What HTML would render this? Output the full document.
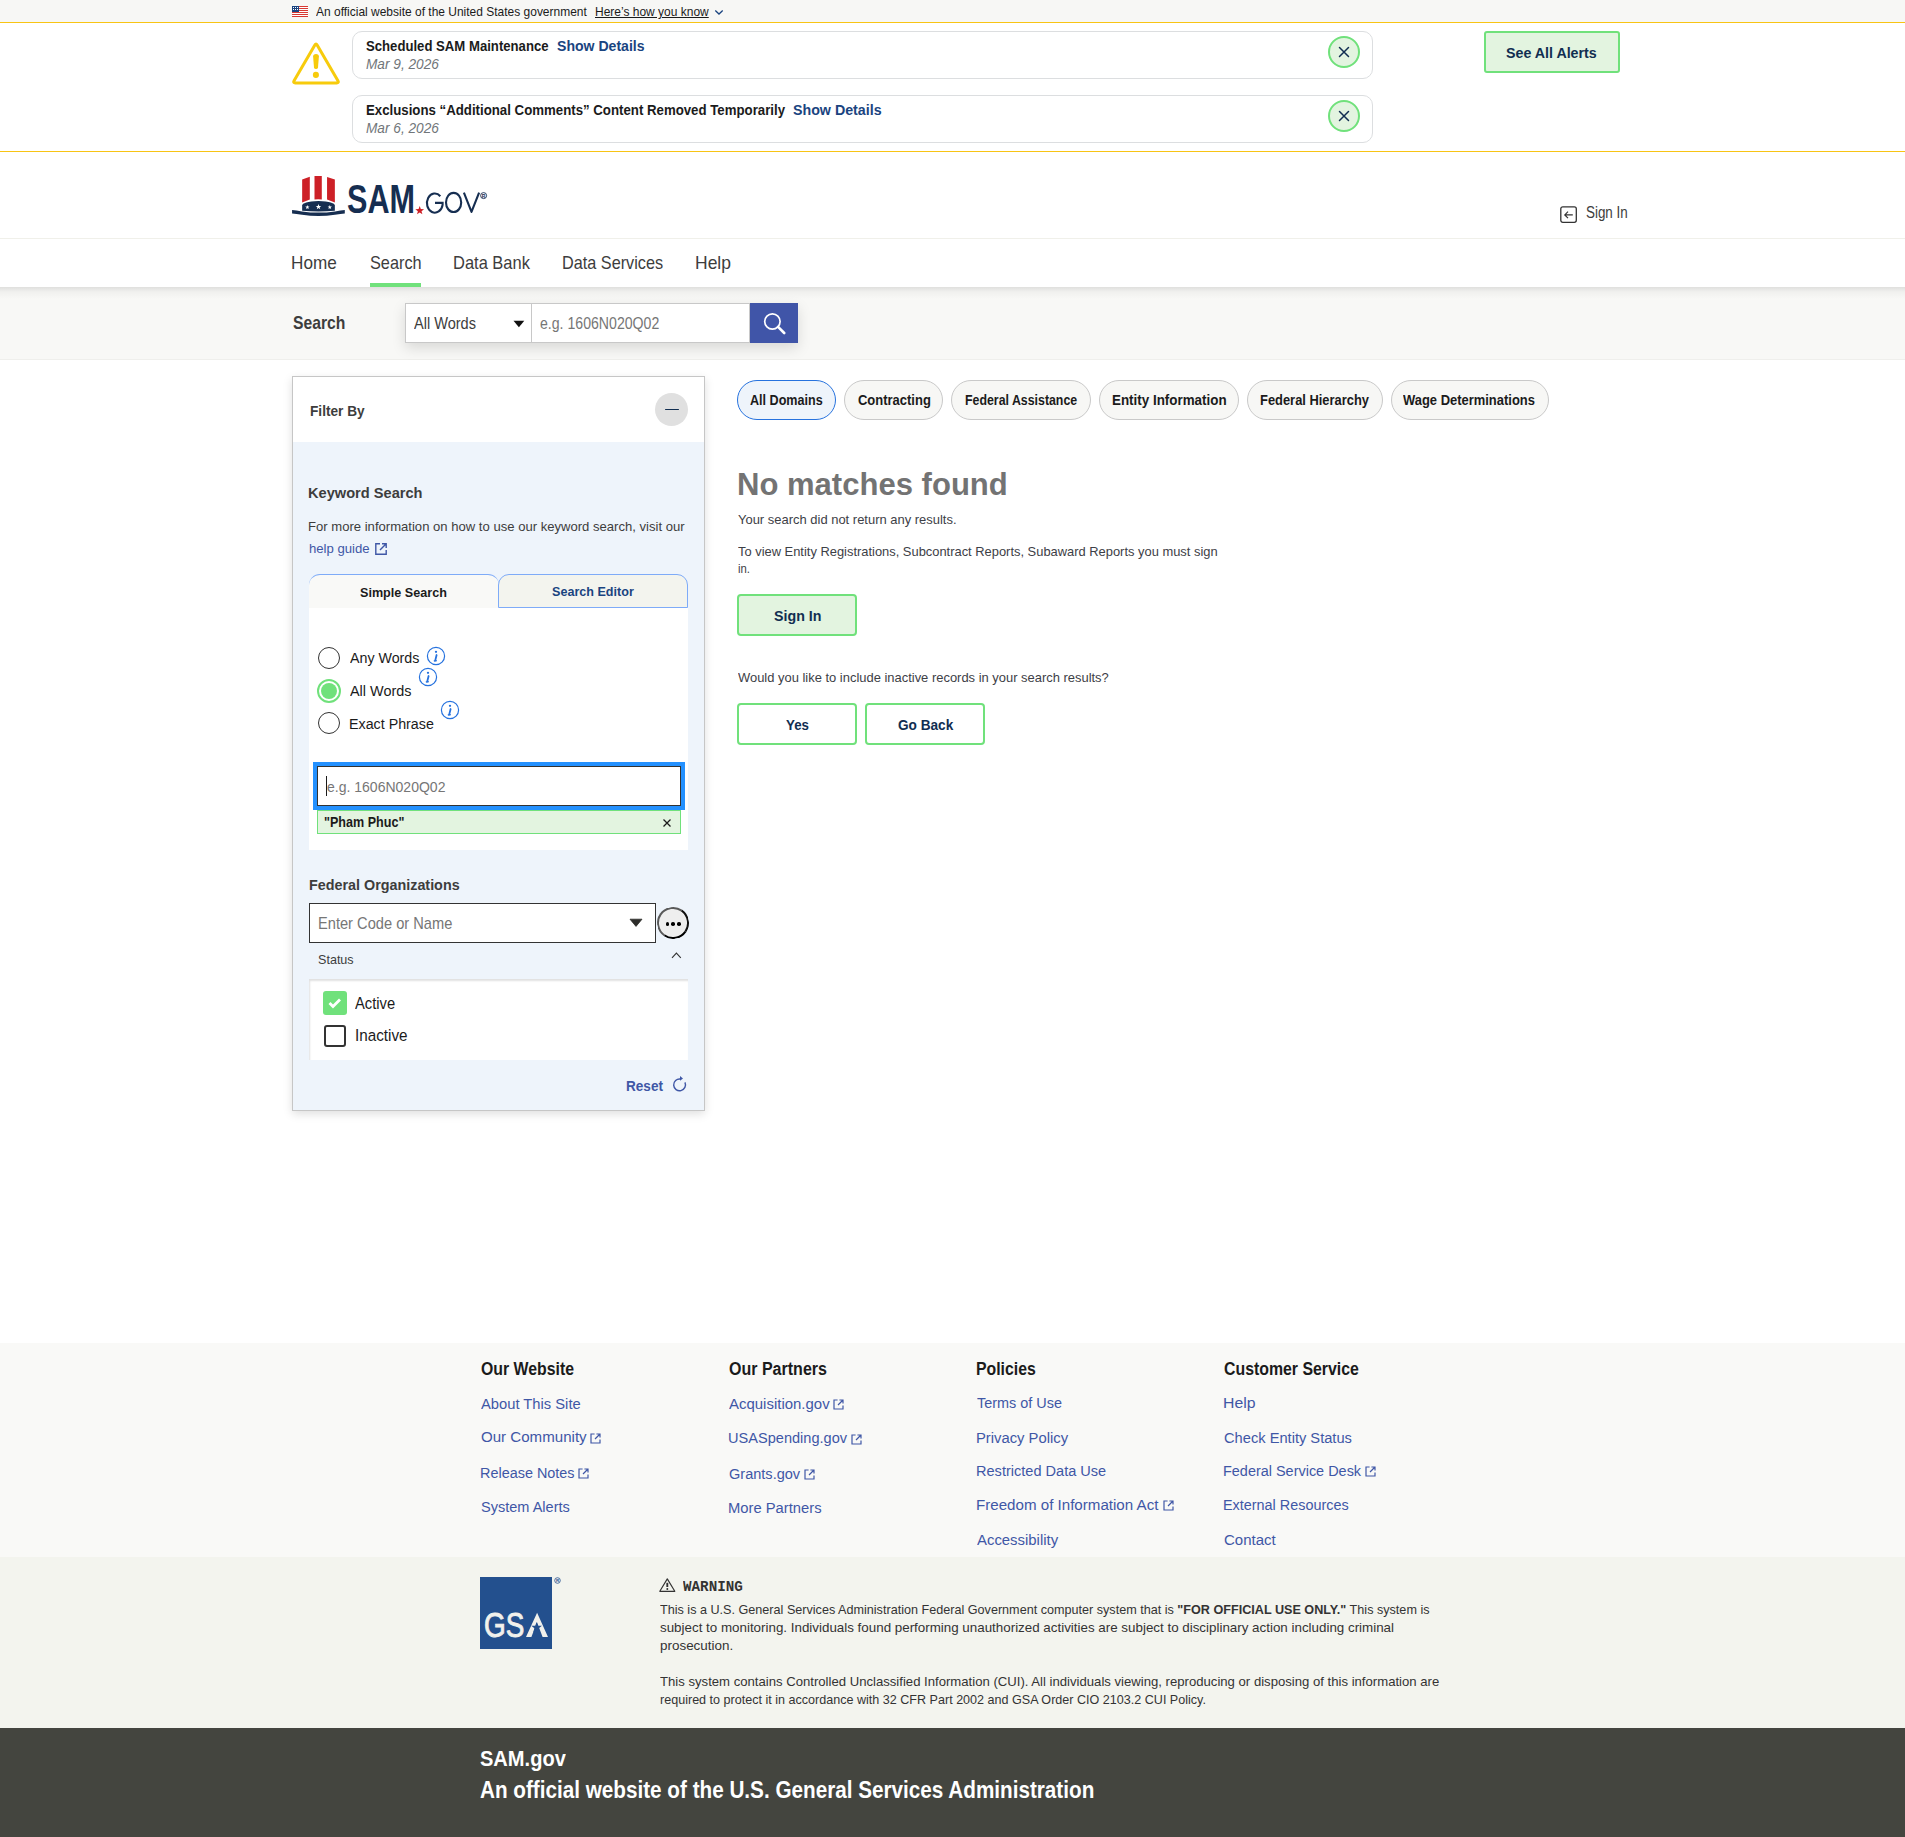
<!DOCTYPE html>
<html><head><meta charset="utf-8"><title>SAM.gov Search</title>
<style>
html,body{margin:0;padding:0}
body{width:1905px;height:1837px;position:relative;overflow:hidden;background:#fff;font-family:'Liberation Sans',sans-serif}
.r{position:absolute}
.t{position:absolute;white-space:nowrap;line-height:1}
</style></head><body>
<div class="r" style="left:0px;top:0px;width:1905px;height:22px;background:#f7f7f5"></div>
<div class="r" style="left:0px;top:22px;width:1905px;height:1px;background:#f8c414"></div>
<svg class="r" style="left:292px;top:6px" width="16" height="11" viewBox="0 0 16 11"><rect width="16" height="11" fill="#fff"/><rect y="0" width="16" height="1" fill="#d83933"/><rect y="2" width="16" height="1" fill="#d83933"/><rect y="4" width="16" height="1" fill="#d83933"/><rect y="6" width="16" height="1" fill="#d83933"/><rect y="8" width="16" height="1" fill="#d83933"/><rect y="10" width="16" height="1" fill="#d83933"/><rect width="7" height="6" fill="#1a4480"/><rect x="1" y="1" width="1" height="1" fill="#fff"/><rect x="1" y="3" width="1" height="1" fill="#fff"/><rect x="3" y="1" width="1" height="1" fill="#fff"/><rect x="3" y="3" width="1" height="1" fill="#fff"/><rect x="5" y="1" width="1" height="1" fill="#fff"/><rect x="5" y="3" width="1" height="1" fill="#fff"/></svg>
<span id="t1" class="t" style="left:316.00px;top:5.00px;font-size:13.62px;font-weight:400;color:#1b1b1b;font-style:normal;font-family:'Liberation Sans', sans-serif;transform:scaleX(0.8803);transform-origin:0 0;">An official website of the United States government</span>
<span id="t2" class="t" style="left:595.12px;top:5.00px;font-size:13.62px;font-weight:400;color:#1b1b1b;font-style:normal;font-family:'Liberation Sans', sans-serif;transform:scaleX(0.8809);transform-origin:0 0;text-decoration:underline;text-underline-offset:1px;">Here’s how you know</span>
<svg class="r" style="left:714px;top:9px" width="10" height="7" viewBox="0 0 10 7"><path d="M1.3 1.5 L5 5 L8.7 1.5" fill="none" stroke="#1a4480" stroke-width="1.3"/></svg>
<div class="r" style="left:0px;top:151px;width:1905px;height:1px;background:#f8c414"></div>
<svg class="r" style="left:291px;top:41px" width="50" height="45" viewBox="0 0 50 45"><path d="M26.26 4.16 L46.94 39.74 Q48.2 41.9 45.7 41.9 L4.3 41.9 Q1.8 41.9 3.06 39.74 L23.74 4.16 Q25 2.0 26.26 4.16 Z" fill="none" stroke="#f7cb0c" stroke-width="3.0" stroke-linejoin="round"/><path d="M22.1 15.6 Q22.1 12.9 25 12.9 Q27.9 12.9 27.9 15.6 L27.0 26.4 Q26.8 28.1 25 28.1 Q23.2 28.1 23.0 26.4 Z" fill="#f7cb0c"/><circle cx="24.9" cy="33.9" r="3.05" fill="#f7cb0c"/></svg>
<div class="r" style="left:352px;top:31px;width:1021px;height:48px;border:1px solid #dcdee0;border-radius:10px;box-sizing:border-box;background:#fff"></div>
<span id="t3" class="t" style="left:365.50px;top:39.01px;font-size:14.49px;font-weight:700;color:#1b1b1b;font-style:normal;font-family:'Liberation Sans', sans-serif;transform:scaleX(0.9073);transform-origin:0 0;">Scheduled SAM Maintenance</span>
<span id="t4" class="t" style="left:556.50px;top:39.01px;font-size:14.49px;font-weight:700;color:#1a4480;font-style:normal;font-family:'Liberation Sans', sans-serif;transform:scaleX(0.9713);transform-origin:0 0;">Show Details</span>
<span id="t5" class="t" style="left:365.50px;top:57.00px;font-size:14.93px;font-weight:400;color:#71767a;font-style:italic;font-family:'Liberation Sans', sans-serif;transform:scaleX(0.9150);transform-origin:0 0;">Mar 9, 2026</span>
<div class="r" style="left:1328px;top:36px;width:32px;height:32px;border:2px solid #70e17b;border-radius:50%;box-sizing:border-box;background:#e3f4e0"></div>
<svg class="r" style="left:1338px;top:46px" width="12" height="12" viewBox="0 0 12 12"><path d="M1.5 1.5 L10.5 10.5 M10.5 1.5 L1.5 10.5" stroke="#112e51" stroke-width="1.5" stroke-linecap="round"/></svg>
<div class="r" style="left:352px;top:95px;width:1021px;height:48px;border:1px solid #dcdee0;border-radius:10px;box-sizing:border-box;background:#fff"></div>
<span id="t6" class="t" style="left:365.50px;top:103.01px;font-size:14.49px;font-weight:700;color:#1b1b1b;font-style:normal;font-family:'Liberation Sans', sans-serif;transform:scaleX(0.9140);transform-origin:0 0;">Exclusions “Additional Comments” Content Removed Temporarily</span>
<span id="t7" class="t" style="left:792.50px;top:103.01px;font-size:14.49px;font-weight:700;color:#1a4480;font-style:normal;font-family:'Liberation Sans', sans-serif;transform:scaleX(0.9824);transform-origin:0 0;">Show Details</span>
<span id="t8" class="t" style="left:365.50px;top:121.00px;font-size:14.93px;font-weight:400;color:#71767a;font-style:italic;font-family:'Liberation Sans', sans-serif;transform:scaleX(0.9150);transform-origin:0 0;">Mar 6, 2026</span>
<div class="r" style="left:1328px;top:100px;width:32px;height:32px;border:2px solid #70e17b;border-radius:50%;box-sizing:border-box;background:#e3f4e0"></div>
<svg class="r" style="left:1338px;top:110px" width="12" height="12" viewBox="0 0 12 12"><path d="M1.5 1.5 L10.5 10.5 M10.5 1.5 L1.5 10.5" stroke="#112e51" stroke-width="1.5" stroke-linecap="round"/></svg>
<div class="r" style="left:1484px;top:31px;width:136px;height:42px;border:2px solid #70e17b;border-radius:3px;box-sizing:border-box;background:#e3f4e0"></div>
<span id="t9" class="t" style="left:1506.40px;top:46.00px;font-size:14.93px;font-weight:700;color:#112e51;font-style:normal;font-family:'Liberation Sans', sans-serif;transform:scaleX(0.9541);transform-origin:0 0;">See All Alerts</span>
<svg class="r" style="left:290px;top:174px" width="200" height="46" viewBox="0 0 200 46">
<path d="M12.15 5.44 L19.8 2.83 L19.8 25.6 L12.15 28.5 Z" fill="#cd2027"/>
<path d="M24.5 2.0 L31.8 2.0 L31.8 25.45 Q28.15 25.1 24.5 25.45 Z" fill="#cd2027"/>
<path d="M37.05 3.0 L44.86 5.44 L44.86 28.5 L37.05 25.6 Z" fill="#cd2027"/>
<path d="M12.15 31.5 Q12.15 27.6 28.5 26.9 Q44.86 27.6 44.86 31.5 L44.86 36.7 Q28.5 38.2 12.15 36.7 Z" fill="#162e51"/>
<path d="M2.07 36.0 Q6 36.2 12 37.4 Q28.5 39.8 45 37.4 Q51 36.2 54.8 36.0 L54.8 39.6 Q51 40.0 45 40.8 Q28.5 43.2 12 40.8 Q6 40.0 2.07 39.6 Z" fill="#162e51"/>
<polygon points="17.40,30.90 17.96,32.43 19.59,32.49 18.30,33.49 18.75,35.06 17.40,34.15 16.05,35.06 16.50,33.49 15.21,32.49 16.84,32.43" fill="#fff"/>
<polygon points="28.50,30.00 29.21,31.93 31.26,32.00 29.64,33.27 30.20,35.25 28.50,34.10 26.80,35.25 27.36,33.27 25.74,32.00 27.79,31.93" fill="#fff"/>
<polygon points="39.80,30.90 40.36,32.43 41.99,32.49 40.70,33.49 41.15,35.06 39.80,34.15 38.45,35.06 38.90,33.49 37.61,32.49 39.24,32.43" fill="#fff"/>
<polygon points="129.70,32.00 130.82,35.06 134.07,35.18 131.51,37.19 132.40,40.32 129.70,38.50 127.00,40.32 127.89,37.19 125.33,35.18 128.58,35.06" fill="#cd2027"/>
<path d="M150.3 22.2 A7.9 9.6 0 1 0 152.6 30.8 L152.6 28.9 L145.0 28.9" fill="none" stroke="#162e51" stroke-width="2.1"/><ellipse cx="163.6" cy="28.45" rx="7.6" ry="9.6" fill="none" stroke="#162e51" stroke-width="2.1"/><path d="M173.9 18.6 L181.5 37.9 L189.1 18.6" fill="none" stroke="#162e51" stroke-width="2.1" stroke-linejoin="round"/><circle cx="193.6" cy="21.6" r="3.0" fill="none" stroke="#162e51" stroke-width="0.9"/><text x="193.6" y="23.6" font-size="5" font-weight="700" text-anchor="middle" fill="#162e51" font-family="Liberation Sans">R</text>
</svg>
<span id="t10" class="t" style="left:346.73px;top:180.01px;font-size:39.86px;font-weight:700;color:#162e51;font-style:normal;font-family:'Liberation Sans', sans-serif;transform:scaleX(0.7672);transform-origin:0 0;">SAM</span>
<div class="r" style="left:0px;top:238px;width:1905px;height:1px;background:#f0f0ea"></div>
<svg class="r" style="left:1559px;top:205px" width="19" height="19" viewBox="0 0 19 19"><rect x="1.8" y="1.8" width="15.5" height="15.5" rx="2" fill="none" stroke="#333" stroke-width="1.3"/><path d="M13.8 9.9 L6 9.9 M9 6.7 L5.8 9.9 L9 13.1" fill="none" stroke="#333" stroke-width="1.2"/></svg>
<span id="t11" class="t" style="left:1586.00px;top:205.01px;font-size:15.94px;font-weight:400;color:#3d3d3d;font-style:normal;font-family:'Liberation Sans', sans-serif;transform:scaleX(0.8410);transform-origin:0 0;">Sign In</span>
<span id="t12" class="t" style="left:291.24px;top:255.01px;font-size:17.97px;font-weight:400;color:#3d3d3d;font-style:normal;font-family:'Liberation Sans', sans-serif;transform:scaleX(0.9551);transform-origin:0 0;">Home</span>
<span id="t13" class="t" style="left:370.00px;top:255.01px;font-size:17.97px;font-weight:400;color:#3d3d3d;font-style:normal;font-family:'Liberation Sans', sans-serif;transform:scaleX(0.9070);transform-origin:0 0;">Search</span>
<span id="t14" class="t" style="left:453.08px;top:255.01px;font-size:17.97px;font-weight:400;color:#3d3d3d;font-style:normal;font-family:'Liberation Sans', sans-serif;transform:scaleX(0.9173);transform-origin:0 0;">Data Bank</span>
<span id="t15" class="t" style="left:561.90px;top:255.01px;font-size:17.97px;font-weight:400;color:#3d3d3d;font-style:normal;font-family:'Liberation Sans', sans-serif;transform:scaleX(0.9045);transform-origin:0 0;">Data Services</span>
<span id="t16" class="t" style="left:694.63px;top:255.01px;font-size:17.97px;font-weight:400;color:#3d3d3d;font-style:normal;font-family:'Liberation Sans', sans-serif;transform:scaleX(0.9739);transform-origin:0 0;">Help</span>
<div class="r" style="left:370px;top:283px;width:51px;height:4px;background:#70e17b"></div>
<div class="r" style="left:0px;top:287px;width:1905px;height:73px;background:#f8f8f6"></div>
<div class="r" style="left:0px;top:287px;width:1905px;height:12px;background:linear-gradient(rgba(0,0,0,0.10),rgba(0,0,0,0.03) 40%,rgba(0,0,0,0))"></div>
<div class="r" style="left:0px;top:359px;width:1905px;height:1px;background:#efefec"></div>
<div class="r" style="left:405px;top:303px;width:393px;height:40px;box-shadow:0 5px 14px rgba(0,0,0,0.13)"></div>
<div class="r" style="left:405px;top:303px;width:127px;height:40px;background:#fff;border:1px solid #c8c8c8;box-sizing:border-box"></div>
<div class="r" style="left:531px;top:303px;width:219px;height:40px;background:#fff;border:1px solid #c8c8c8;box-sizing:border-box"></div>
<div class="r" style="left:750px;top:303px;width:48px;height:40px;background:#4055a8"></div>
<svg class="r" style="left:761px;top:311px" width="25" height="25" viewBox="0 0 25 25"><circle cx="11.4" cy="10.5" r="7.7" fill="none" stroke="#fff" stroke-width="1.7"/><path d="M17.1 15.9 L23.2 22" stroke="#fff" stroke-width="2.6" stroke-linecap="round"/></svg>
<svg class="r" style="left:513px;top:320px" width="12" height="8" viewBox="0 0 12 8"><path d="M0.5 0.8 L11.3 0.8 L5.9 7.2 Z" fill="#111"/></svg>
<span id="t17" class="t" style="left:292.50px;top:315.01px;font-size:17.97px;font-weight:700;color:#3d3d3d;font-style:normal;font-family:'Liberation Sans', sans-serif;transform:scaleX(0.8741);transform-origin:0 0;">Search</span>
<span id="t18" class="t" style="left:414.40px;top:316.01px;font-size:15.94px;font-weight:400;color:#3d3d3d;font-style:normal;font-family:'Liberation Sans', sans-serif;transform:scaleX(0.9127);transform-origin:0 0;">All Words</span>
<span id="t19" class="t" style="left:540.40px;top:316.01px;font-size:15.94px;font-weight:400;color:#767676;font-style:normal;font-family:'Liberation Sans', sans-serif;transform:scaleX(0.8856);transform-origin:0 0;">e.g. 1606N020Q02</span>
<div class="r" style="left:292px;top:376px;width:413px;height:735px;background:#eef4fb;border:1px solid #c6c6c6;box-sizing:border-box;box-shadow:0 3px 9px rgba(0,0,0,0.13)"></div>
<div class="r" style="left:293px;top:377px;width:411px;height:65px;background:#fff"></div>
<span id="t20" class="t" style="left:309.80px;top:404.00px;font-size:14.64px;font-weight:700;color:#3d3d3d;font-style:normal;font-family:'Liberation Sans', sans-serif;transform:scaleX(0.9346);transform-origin:0 0;">Filter By</span>
<div class="r" style="left:655px;top:393px;width:33px;height:33px;background:#e0e0e0;border-radius:50%"></div>
<div class="r" style="left:665px;top:408.8px;width:14px;height:1.6px;background:#112e51;border-radius:1px"></div>
<span id="t21" class="t" style="left:308.42px;top:486.01px;font-size:14.93px;font-weight:700;color:#3d3d3d;font-style:normal;font-family:'Liberation Sans', sans-serif;transform:scaleX(0.9791);transform-origin:0 0;">Keyword Search</span>
<span id="t22" class="t" style="left:308.40px;top:520.01px;font-size:13.04px;font-weight:400;color:#3d3d3d;font-style:normal;font-family:'Liberation Sans', sans-serif;transform:scaleX(1.0039);transform-origin:0 0;">For more information on how to use our keyword search, visit our</span>
<span id="t23" class="t" style="left:309.40px;top:542.01px;font-size:13.04px;font-weight:400;color:#3f57a6;font-style:normal;font-family:'Liberation Sans', sans-serif;transform:scaleX(1.0084);transform-origin:0 0;">help guide</span>
<svg class="r" style="left:374px;top:542px" width="14" height="14" viewBox="0 0 14 14"><path d="M6 1.8 L1.8 1.8 L1.8 12.2 L12.2 12.2 L12.2 8" fill="none" stroke="#3f57a6" stroke-width="1.4"/><path d="M8 1.8 L12.2 1.8 L12.2 6 M12.2 1.8 L6 8" fill="none" stroke="#3f57a6" stroke-width="1.4"/></svg>
<div class="r" style="left:309px;top:608px;width:379px;height:242px;background:#fff"></div>
<div class="r" style="left:309px;top:574px;width:190px;height:34px;background:#f9f9f7;border-top:1px solid #7eabf8;border-radius:11px 11px 0 0;box-sizing:border-box"></div>
<div class="r" style="left:498px;top:574px;width:190px;height:34px;background:#f3f4ee;border:1px solid #7eabf8;border-radius:11px 11px 0 0;box-sizing:border-box"></div>
<span id="t24" class="t" style="left:359.80px;top:586.01px;font-size:13.33px;font-weight:700;color:#1b1b1b;font-style:normal;font-family:'Liberation Sans', sans-serif;transform:scaleX(0.9453);transform-origin:0 0;">Simple Search</span>
<span id="t25" class="t" style="left:552.30px;top:585.01px;font-size:13.33px;font-weight:700;color:#1a4480;font-style:normal;font-family:'Liberation Sans', sans-serif;transform:scaleX(0.9437);transform-origin:0 0;">Search Editor</span>
<div class="r" style="left:318px;top:647px;width:22px;height:22px;border:1.5px solid #333;border-radius:50%;box-sizing:border-box;background:#fff"></div>
<div class="r" style="left:317px;top:679px;width:24px;height:24px;border:2px solid #70e17b;border-radius:50%;box-sizing:border-box;background:#fff"></div>
<div class="r" style="left:321px;top:683px;width:16px;height:16px;border-radius:50%;background:#70e17b"></div>
<div class="r" style="left:318px;top:712px;width:22px;height:22px;border:1.5px solid #333;border-radius:50%;box-sizing:border-box;background:#fff"></div>
<span id="t26" class="t" style="left:349.50px;top:650.01px;font-size:15.22px;font-weight:400;color:#1b1b1b;font-style:normal;font-family:'Liberation Sans', sans-serif;transform:scaleX(0.9351);transform-origin:0 0;">Any Words</span>
<span id="t27" class="t" style="left:349.50px;top:683.01px;font-size:15.22px;font-weight:400;color:#1b1b1b;font-style:normal;font-family:'Liberation Sans', sans-serif;transform:scaleX(0.9475);transform-origin:0 0;">All Words</span>
<span id="t28" class="t" style="left:348.56px;top:716.01px;font-size:15.22px;font-weight:400;color:#1b1b1b;font-style:normal;font-family:'Liberation Sans', sans-serif;transform:scaleX(0.9377);transform-origin:0 0;">Exact Phrase</span>
<svg class="r" style="left:426.3px;top:646.2px" width="20" height="20" viewBox="0 0 20 20"><circle cx="10" cy="10" r="8.6" fill="none" stroke="#2672de" stroke-width="1.2"/><path d="M10.6 9.0 L9.2 14.6 M8.6 14.8 L10.0 14.6" stroke="#2672de" stroke-width="1.8" stroke-linecap="round"/><circle cx="10.0" cy="5.8" r="1.15" fill="#2672de"/></svg>
<svg class="r" style="left:418.2px;top:667.1px" width="20" height="20" viewBox="0 0 20 20"><circle cx="10" cy="10" r="8.6" fill="none" stroke="#2672de" stroke-width="1.2"/><path d="M10.6 9.0 L9.2 14.6 M8.6 14.8 L10.0 14.6" stroke="#2672de" stroke-width="1.8" stroke-linecap="round"/><circle cx="10.0" cy="5.8" r="1.15" fill="#2672de"/></svg>
<svg class="r" style="left:440.3px;top:700.0px" width="20" height="20" viewBox="0 0 20 20"><circle cx="10" cy="10" r="8.6" fill="none" stroke="#2672de" stroke-width="1.2"/><path d="M10.6 9.0 L9.2 14.6 M8.6 14.8 L10.0 14.6" stroke="#2672de" stroke-width="1.8" stroke-linecap="round"/><circle cx="10.0" cy="5.8" r="1.15" fill="#2672de"/></svg>
<div class="r" style="left:313px;top:762px;width:372px;height:48px;background:#2491ff"></div>
<div class="r" style="left:317px;top:766px;width:364px;height:40px;background:#fff;border:1px solid #333;box-sizing:border-box"></div>
<div class="r" style="left:326px;top:776px;width:1px;height:20px;background:#1b1b1b"></div>
<span id="t29" class="t" style="left:327.00px;top:779.00px;font-size:15.22px;font-weight:400;color:#767676;font-style:normal;font-family:'Liberation Sans', sans-serif;transform:scaleX(0.9208);transform-origin:0 0;">e.g. 1606N020Q02</span>
<div class="r" style="left:317px;top:810px;width:364px;height:24px;background:#e3f4e0;border:1px solid #70e17b;box-sizing:border-box"></div>
<span id="t30" class="t" style="left:323.50px;top:816.01px;font-size:13.91px;font-weight:700;color:#1b1b1b;font-style:normal;font-family:'Liberation Sans', sans-serif;transform:scaleX(0.9035);transform-origin:0 0;">"Pham Phuc"</span>
<svg class="r" style="left:662px;top:818px" width="10" height="10" viewBox="0 0 10 10"><path d="M1.5 1.5 L8.5 8.5 M8.5 1.5 L1.5 8.5" stroke="#1b1b1b" stroke-width="1.3"/></svg>
<span id="t31" class="t" style="left:308.55px;top:877.01px;font-size:15.07px;font-weight:700;color:#3d3d3d;font-style:normal;font-family:'Liberation Sans', sans-serif;transform:scaleX(0.9521);transform-origin:0 0;">Federal Organizations</span>
<div class="r" style="left:309px;top:903px;width:347px;height:40px;background:#fff;border:1px solid #333;box-sizing:border-box"></div>
<span id="t32" class="t" style="left:317.50px;top:915.00px;font-size:16.38px;font-weight:400;color:#767676;font-style:normal;font-family:'Liberation Sans', sans-serif;transform:scaleX(0.8950);transform-origin:0 0;">Enter Code or Name</span>
<svg class="r" style="left:629px;top:918px" width="14" height="10" viewBox="0 0 14 10"><path d="M1 1.2 L13 1.2 L7 8.4 Z" fill="#2d2d2a" stroke="#2d2d2a" stroke-width="0.8" stroke-linejoin="round"/></svg>
<div class="r" style="left:656.5px;top:907px;width:31.5px;height:31.8px;border:2px solid #111;border-color:#5a5a5a #111 #000 #5a5a5a;border-radius:50%;box-sizing:border-box;background:#eee;transform:rotate(-10deg)"></div>
<div class="r" style="left:665.6px;top:922.4px;width:3.6px;height:3.6px;background:#000;border-radius:50%"></div>
<div class="r" style="left:671.4000000000001px;top:922.4px;width:3.6px;height:3.6px;background:#000;border-radius:50%"></div>
<div class="r" style="left:677.2px;top:922.4px;width:3.6px;height:3.6px;background:#000;border-radius:50%"></div>
<span id="t33" class="t" style="left:317.50px;top:954.01px;font-size:12.32px;font-weight:400;color:#3d3d3d;font-style:normal;font-family:'Liberation Sans', sans-serif;transform:scaleX(1.0216);transform-origin:0 0;">Status</span>
<svg class="r" style="left:670px;top:950px" width="13" height="10" viewBox="0 0 13 10"><path d="M2.0 7.9 L6.4 3.1 L10.8 7.9" fill="none" stroke="#333" stroke-width="1.1"/></svg>
<div class="r" style="left:309px;top:979px;width:379px;height:81px;background:#fff;box-shadow:inset 1px 2px 2px rgba(0,0,0,0.12)"></div>
<div class="r" style="left:323px;top:991px;width:24px;height:24px;border-radius:3px;background:#70e17b"></div>
<svg class="r" style="left:323px;top:991px" width="24" height="24" viewBox="0 0 24 24"><path d="M6.5 12 L10 15.5 L17 8.5" fill="none" stroke="#fff" stroke-width="2.8"/></svg>
<div class="r" style="left:324px;top:1025px;width:22px;height:22px;border:2px solid #333;border-radius:3px;box-sizing:border-box;background:#fff"></div>
<span id="t34" class="t" style="left:354.80px;top:996.01px;font-size:15.94px;font-weight:400;color:#1b1b1b;font-style:normal;font-family:'Liberation Sans', sans-serif;transform:scaleX(0.9234);transform-origin:0 0;">Active</span>
<span id="t35" class="t" style="left:354.74px;top:1028.01px;font-size:15.94px;font-weight:400;color:#1b1b1b;font-style:normal;font-family:'Liberation Sans', sans-serif;transform:scaleX(0.9563);transform-origin:0 0;">Inactive</span>
<span id="t36" class="t" style="left:625.50px;top:1079.00px;font-size:14.20px;font-weight:700;color:#3f57a6;font-style:normal;font-family:'Liberation Sans', sans-serif;transform:scaleX(0.9559);transform-origin:0 0;">Reset</span>
<svg class="r" style="left:671px;top:1075px" width="17" height="18" viewBox="0 0 17 18"><path d="M9.4 4.0 A5.9 5.9 0 1 0 13.95 7.4" fill="none" stroke="#3f57a6" stroke-width="1.4"/><path d="M9.0 1.0 L12.0 3.4 L9.0 5.8 Z" fill="#3f57a6"/></svg>
<div class="r" style="left:737px;top:380px;width:99px;height:40px;background:#eef4fb;border:1px solid #2672de;border-radius:20px;box-sizing:border-box"></div>
<span id="t37" class="t" style="left:750.40px;top:393.01px;font-size:14.20px;font-weight:700;color:#1b1b1b;font-style:normal;font-family:'Liberation Sans', sans-serif;transform:scaleX(0.8868);transform-origin:0 0;">All Domains</span>
<div class="r" style="left:844px;top:380px;width:99px;height:40px;background:#f7f7f5;border:1px solid #c9c9c9;border-radius:20px;box-sizing:border-box"></div>
<span id="t38" class="t" style="left:857.80px;top:393.01px;font-size:14.20px;font-weight:700;color:#1b1b1b;font-style:normal;font-family:'Liberation Sans', sans-serif;transform:scaleX(0.9146);transform-origin:0 0;">Contracting</span>
<div class="r" style="left:951px;top:380px;width:140px;height:40px;background:#f7f7f5;border:1px solid #c9c9c9;border-radius:20px;box-sizing:border-box"></div>
<span id="t39" class="t" style="left:964.60px;top:393.01px;font-size:14.20px;font-weight:700;color:#1b1b1b;font-style:normal;font-family:'Liberation Sans', sans-serif;transform:scaleX(0.8707);transform-origin:0 0;">Federal Assistance</span>
<div class="r" style="left:1099px;top:380px;width:140px;height:40px;background:#f7f7f5;border:1px solid #c9c9c9;border-radius:20px;box-sizing:border-box"></div>
<span id="t40" class="t" style="left:1111.70px;top:393.01px;font-size:14.20px;font-weight:700;color:#1b1b1b;font-style:normal;font-family:'Liberation Sans', sans-serif;transform:scaleX(0.9444);transform-origin:0 0;">Entity Information</span>
<div class="r" style="left:1247px;top:380px;width:136px;height:40px;background:#f7f7f5;border:1px solid #c9c9c9;border-radius:20px;box-sizing:border-box"></div>
<span id="t41" class="t" style="left:1260.20px;top:393.01px;font-size:14.20px;font-weight:700;color:#1b1b1b;font-style:normal;font-family:'Liberation Sans', sans-serif;transform:scaleX(0.9093);transform-origin:0 0;">Federal Hierarchy</span>
<div class="r" style="left:1391px;top:380px;width:158px;height:40px;background:#f7f7f5;border:1px solid #c9c9c9;border-radius:20px;box-sizing:border-box"></div>
<span id="t42" class="t" style="left:1403.40px;top:393.01px;font-size:14.20px;font-weight:700;color:#1b1b1b;font-style:normal;font-family:'Liberation Sans', sans-serif;transform:scaleX(0.9126);transform-origin:0 0;">Wage Determinations</span>
<span id="t43" class="t" style="left:737.05px;top:469.01px;font-size:31.88px;font-weight:700;color:#737373;font-style:normal;font-family:'Liberation Sans', sans-serif;transform:scaleX(0.9739);transform-origin:0 0;">No matches found</span>
<span id="t44" class="t" style="left:737.50px;top:514.01px;font-size:12.75px;font-weight:400;color:#3d4046;font-style:normal;font-family:'Liberation Sans', sans-serif;transform:scaleX(1.0166);transform-origin:0 0;">Your search did not return any results.</span>
<span id="t45" class="t" style="left:737.50px;top:546.02px;font-size:12.75px;font-weight:400;color:#3d4046;font-style:normal;font-family:'Liberation Sans', sans-serif;transform:scaleX(1.0116);transform-origin:0 0;">To view Entity Registrations, Subcontract Reports, Subaward Reports you must sign</span>
<span id="t46" class="t" style="left:737.50px;top:563.02px;font-size:12.75px;font-weight:400;color:#3d4046;font-style:normal;font-family:'Liberation Sans', sans-serif;transform:scaleX(0.8898);transform-origin:0 0;">in.</span>
<div class="r" style="left:737px;top:594px;width:120px;height:42px;background:#e3f4e0;border:2px solid #70e17b;border-radius:4px;box-sizing:border-box"></div>
<span id="t47" class="t" style="left:773.90px;top:609.00px;font-size:14.93px;font-weight:700;color:#112e51;font-style:normal;font-family:'Liberation Sans', sans-serif;transform:scaleX(0.9532);transform-origin:0 0;">Sign In</span>
<span id="t48" class="t" style="left:737.50px;top:672.00px;font-size:12.75px;font-weight:400;color:#3d4046;font-style:normal;font-family:'Liberation Sans', sans-serif;transform:scaleX(1.0146);transform-origin:0 0;">Would you like to include inactive records in your search results?</span>
<div class="r" style="left:737px;top:703px;width:120px;height:42px;background:#fff;border:2px solid #70e17b;border-radius:4px;box-sizing:border-box"></div>
<div class="r" style="left:865px;top:703px;width:120px;height:42px;background:#fff;border:2px solid #70e17b;border-radius:4px;box-sizing:border-box"></div>
<span id="t49" class="t" style="left:786.00px;top:718.00px;font-size:14.93px;font-weight:700;color:#112e51;font-style:normal;font-family:'Liberation Sans', sans-serif;transform:scaleX(0.8927);transform-origin:0 0;">Yes</span>
<span id="t50" class="t" style="left:897.50px;top:718.00px;font-size:14.93px;font-weight:700;color:#112e51;font-style:normal;font-family:'Liberation Sans', sans-serif;transform:scaleX(0.9128);transform-origin:0 0;">Go Back</span>
<div class="r" style="left:0px;top:1343px;width:1905px;height:214px;background:#f9f9f7"></div>
<div class="r" style="left:0px;top:1557px;width:1905px;height:171px;background:#f3f4ee"></div>
<div class="r" style="left:0px;top:1728px;width:1905px;height:109px;background:#44453f"></div>
<span id="t51" class="t" style="left:480.50px;top:1361.02px;font-size:17.68px;font-weight:700;color:#1b1b1b;font-style:normal;font-family:'Liberation Sans', sans-serif;transform:scaleX(0.8967);transform-origin:0 0;">Our Website</span>
<span id="t52" class="t" style="left:480.50px;top:1396.01px;font-size:15.22px;font-weight:400;color:#3f57a6;font-style:normal;font-family:'Liberation Sans', sans-serif;transform:scaleX(0.9685);transform-origin:0 0;">About This Site</span>
<span id="t53" class="t" style="left:480.50px;top:1429.01px;font-size:15.22px;font-weight:400;color:#3f57a6;font-style:normal;font-family:'Liberation Sans', sans-serif;transform:scaleX(0.9912);transform-origin:0 0;">Our Community</span>
<svg class="r" style="left:590.0px;top:1432.7px" width="11" height="11" viewBox="0 0 11 11"><path d="M4.6 1 L1 1 L1 10 L10 10 L10 6.4" fill="none" stroke="#3f57a6" stroke-width="1.2"/><path d="M6.4 1 L10 1 L10 4.6 M10 1 L5 6" fill="none" stroke="#3f57a6" stroke-width="1.2"/></svg>
<span id="t54" class="t" style="left:479.55px;top:1465.00px;font-size:15.22px;font-weight:400;color:#3f57a6;font-style:normal;font-family:'Liberation Sans', sans-serif;transform:scaleX(0.9475);transform-origin:0 0;">Release Notes</span>
<svg class="r" style="left:578.0px;top:1467.8px" width="11" height="11" viewBox="0 0 11 11"><path d="M4.6 1 L1 1 L1 10 L10 10 L10 6.4" fill="none" stroke="#3f57a6" stroke-width="1.2"/><path d="M6.4 1 L10 1 L10 4.6 M10 1 L5 6" fill="none" stroke="#3f57a6" stroke-width="1.2"/></svg>
<span id="t55" class="t" style="left:480.50px;top:1499.00px;font-size:15.22px;font-weight:400;color:#3f57a6;font-style:normal;font-family:'Liberation Sans', sans-serif;transform:scaleX(0.9548);transform-origin:0 0;">System Alerts</span>
<span id="t56" class="t" style="left:728.50px;top:1361.02px;font-size:17.68px;font-weight:700;color:#1b1b1b;font-style:normal;font-family:'Liberation Sans', sans-serif;transform:scaleX(0.9066);transform-origin:0 0;">Our Partners</span>
<span id="t57" class="t" style="left:728.50px;top:1396.01px;font-size:15.22px;font-weight:400;color:#3f57a6;font-style:normal;font-family:'Liberation Sans', sans-serif;transform:scaleX(0.9829);transform-origin:0 0;">Acquisition.gov</span>
<svg class="r" style="left:833.0px;top:1399.0px" width="11" height="11" viewBox="0 0 11 11"><path d="M4.6 1 L1 1 L1 10 L10 10 L10 6.4" fill="none" stroke="#3f57a6" stroke-width="1.2"/><path d="M6.4 1 L10 1 L10 4.6 M10 1 L5 6" fill="none" stroke="#3f57a6" stroke-width="1.2"/></svg>
<span id="t58" class="t" style="left:727.54px;top:1430.00px;font-size:15.22px;font-weight:400;color:#3f57a6;font-style:normal;font-family:'Liberation Sans', sans-serif;transform:scaleX(0.9575);transform-origin:0 0;">USASpending.gov</span>
<svg class="r" style="left:850.5px;top:1433.6px" width="11" height="11" viewBox="0 0 11 11"><path d="M4.6 1 L1 1 L1 10 L10 10 L10 6.4" fill="none" stroke="#3f57a6" stroke-width="1.2"/><path d="M6.4 1 L10 1 L10 4.6 M10 1 L5 6" fill="none" stroke="#3f57a6" stroke-width="1.2"/></svg>
<span id="t59" class="t" style="left:728.50px;top:1466.01px;font-size:15.22px;font-weight:400;color:#3f57a6;font-style:normal;font-family:'Liberation Sans', sans-serif;transform:scaleX(0.9555);transform-origin:0 0;">Grants.gov</span>
<svg class="r" style="left:803.5px;top:1468.9px" width="11" height="11" viewBox="0 0 11 11"><path d="M4.6 1 L1 1 L1 10 L10 10 L10 6.4" fill="none" stroke="#3f57a6" stroke-width="1.2"/><path d="M6.4 1 L10 1 L10 4.6 M10 1 L5 6" fill="none" stroke="#3f57a6" stroke-width="1.2"/></svg>
<span id="t60" class="t" style="left:727.53px;top:1500.01px;font-size:15.22px;font-weight:400;color:#3f57a6;font-style:normal;font-family:'Liberation Sans', sans-serif;transform:scaleX(0.9707);transform-origin:0 0;">More Partners</span>
<span id="t61" class="t" style="left:975.71px;top:1361.02px;font-size:17.68px;font-weight:700;color:#1b1b1b;font-style:normal;font-family:'Liberation Sans', sans-serif;transform:scaleX(0.8944);transform-origin:0 0;">Policies</span>
<span id="t62" class="t" style="left:976.60px;top:1395.01px;font-size:15.22px;font-weight:400;color:#3f57a6;font-style:normal;font-family:'Liberation Sans', sans-serif;transform:scaleX(0.9476);transform-origin:0 0;">Terms of Use</span>
<span id="t63" class="t" style="left:975.63px;top:1430.00px;font-size:15.22px;font-weight:400;color:#3f57a6;font-style:normal;font-family:'Liberation Sans', sans-serif;transform:scaleX(0.9723);transform-origin:0 0;">Privacy Policy</span>
<span id="t64" class="t" style="left:975.64px;top:1463.01px;font-size:15.22px;font-weight:400;color:#3f57a6;font-style:normal;font-family:'Liberation Sans', sans-serif;transform:scaleX(0.9561);transform-origin:0 0;">Restricted Data Use</span>
<span id="t65" class="t" style="left:975.61px;top:1497.00px;font-size:15.22px;font-weight:400;color:#3f57a6;font-style:normal;font-family:'Liberation Sans', sans-serif;transform:scaleX(0.9937);transform-origin:0 0;">Freedom of Information Act</span>
<svg class="r" style="left:1163.1px;top:1499.8px" width="11" height="11" viewBox="0 0 11 11"><path d="M4.6 1 L1 1 L1 10 L10 10 L10 6.4" fill="none" stroke="#3f57a6" stroke-width="1.2"/><path d="M6.4 1 L10 1 L10 4.6 M10 1 L5 6" fill="none" stroke="#3f57a6" stroke-width="1.2"/></svg>
<span id="t66" class="t" style="left:976.60px;top:1532.00px;font-size:15.22px;font-weight:400;color:#3f57a6;font-style:normal;font-family:'Liberation Sans', sans-serif;transform:scaleX(0.9788);transform-origin:0 0;">Accessibility</span>
<span id="t67" class="t" style="left:1224.30px;top:1361.02px;font-size:17.68px;font-weight:700;color:#1b1b1b;font-style:normal;font-family:'Liberation Sans', sans-serif;transform:scaleX(0.8973);transform-origin:0 0;">Customer Service</span>
<span id="t68" class="t" style="left:1223.26px;top:1395.01px;font-size:15.22px;font-weight:400;color:#3f57a6;font-style:normal;font-family:'Liberation Sans', sans-serif;transform:scaleX(1.0390);transform-origin:0 0;">Help</span>
<span id="t69" class="t" style="left:1224.30px;top:1430.00px;font-size:15.22px;font-weight:400;color:#3f57a6;font-style:normal;font-family:'Liberation Sans', sans-serif;transform:scaleX(0.9633);transform-origin:0 0;">Check Entity Status</span>
<span id="t70" class="t" style="left:1223.35px;top:1463.01px;font-size:15.22px;font-weight:400;color:#3f57a6;font-style:normal;font-family:'Liberation Sans', sans-serif;transform:scaleX(0.9491);transform-origin:0 0;">Federal Service Desk</span>
<svg class="r" style="left:1365.3px;top:1465.9px" width="11" height="11" viewBox="0 0 11 11"><path d="M4.6 1 L1 1 L1 10 L10 10 L10 6.4" fill="none" stroke="#3f57a6" stroke-width="1.2"/><path d="M6.4 1 L10 1 L10 4.6 M10 1 L5 6" fill="none" stroke="#3f57a6" stroke-width="1.2"/></svg>
<span id="t71" class="t" style="left:1223.35px;top:1497.00px;font-size:15.22px;font-weight:400;color:#3f57a6;font-style:normal;font-family:'Liberation Sans', sans-serif;transform:scaleX(0.9456);transform-origin:0 0;">External Resources</span>
<span id="t72" class="t" style="left:1224.30px;top:1532.00px;font-size:15.22px;font-weight:400;color:#3f57a6;font-style:normal;font-family:'Liberation Sans', sans-serif;transform:scaleX(0.9865);transform-origin:0 0;">Contact</span>
<div class="r" style="left:480px;top:1577px;width:72px;height:72px;background:#23508e"></div>
<span id="t73" class="t" style="left:484.21px;top:1608.02px;font-size:35.51px;font-weight:400;color:#f1f1ec;font-style:normal;font-family:'Liberation Sans', sans-serif;transform:scaleX(0.7861);transform-origin:0 0;-webkit-text-stroke:0.9px #f1f1ec;">GS</span>
<svg class="r" style="left:525px;top:1612px" width="24" height="27" viewBox="0 0 24 27"><path fill-rule="evenodd" d="M1 25 L12.1 0.8 L23 25 Z M6.4 25 L17.6 25 L12 10.3 Z" fill="#f1f1ec"/><polygon points="11.60,10.00 12.95,13.74 16.93,13.87 13.79,16.31 14.89,20.13 11.60,17.90 8.31,20.13 9.41,16.31 6.27,13.87 10.25,13.74" fill="#23508e"/></svg>
<svg class="r" style="left:554px;top:1577px" width="7" height="7" viewBox="0 0 7 7"><circle cx="3.5" cy="3.5" r="2.8" fill="none" stroke="#23508e" stroke-width="0.8"/><text x="3.5" y="5.2" font-size="4.4" font-weight="700" text-anchor="middle" fill="#23508e" font-family="Liberation Sans">R</text></svg>
<svg class="r" style="left:658px;top:1577px" width="19" height="16" viewBox="0 0 19 16"><path d="M9.3 1.9 L16.8 14.3 L1.8 14.3 Z" fill="none" stroke="#333" stroke-width="1.15" stroke-linejoin="round"/><path d="M9.3 5.8 L9.3 10.0" stroke="#333" stroke-width="1.9"/><circle cx="9.3" cy="12.0" r="1.0" fill="#333"/></svg>
<span id="t74" class="t" style="left:683.00px;top:1580.01px;font-size:15.22px;font-weight:700;color:#333;font-style:normal;font-family:'Liberation Mono', monospace;transform:scaleX(0.9374);transform-origin:0 0;">WARNING</span>
<span id="t75" class="t" style="left:659.70px;top:1603.01px;font-size:13.33px;font-weight:400;color:#333;font-style:normal;font-family:'Liberation Sans', sans-serif;transform:scaleX(0.9464);transform-origin:0 0;">This is a U.S. General Services Administration Federal Government computer system that is <b>"FOR OFFICIAL USE ONLY."</b> This system is</span>
<span id="t76" class="t" style="left:659.70px;top:1621.01px;font-size:13.33px;font-weight:400;color:#333;font-style:normal;font-family:'Liberation Sans', sans-serif;transform:scaleX(1.0028);transform-origin:0 0;">subject to monitoring. Individuals found performing unauthorized activities are subject to disciplinary action including criminal</span>
<span id="t77" class="t" style="left:659.70px;top:1639.01px;font-size:13.33px;font-weight:400;color:#333;font-style:normal;font-family:'Liberation Sans', sans-serif;transform:scaleX(1.0083);transform-origin:0 0;">prosecution.</span>
<span id="t78" class="t" style="left:659.70px;top:1675.01px;font-size:13.33px;font-weight:400;color:#333;font-style:normal;font-family:'Liberation Sans', sans-serif;transform:scaleX(0.9849);transform-origin:0 0;">This system contains Controlled Unclassified Information (CUI). All individuals viewing, reproducing or disposing of this information are</span>
<span id="t79" class="t" style="left:659.70px;top:1693.01px;font-size:13.33px;font-weight:400;color:#333;font-style:normal;font-family:'Liberation Sans', sans-serif;transform:scaleX(0.9428);transform-origin:0 0;">required to protect it in accordance with 32 CFR Part 2002 and GSA Order CIO 2103.2 CUI Policy.</span>
<span id="t80" class="t" style="left:480.00px;top:1748.00px;font-size:21.74px;font-weight:700;color:#fff;font-style:normal;font-family:'Liberation Sans', sans-serif;transform:scaleX(0.9226);transform-origin:0 0;">SAM.gov</span>
<span id="t81" class="t" style="left:480.00px;top:1779.01px;font-size:23.19px;font-weight:700;color:#fff;font-style:normal;font-family:'Liberation Sans', sans-serif;transform:scaleX(0.8922);transform-origin:0 0;">An official website of the U.S. General Services Administration</span>
</body></html>
